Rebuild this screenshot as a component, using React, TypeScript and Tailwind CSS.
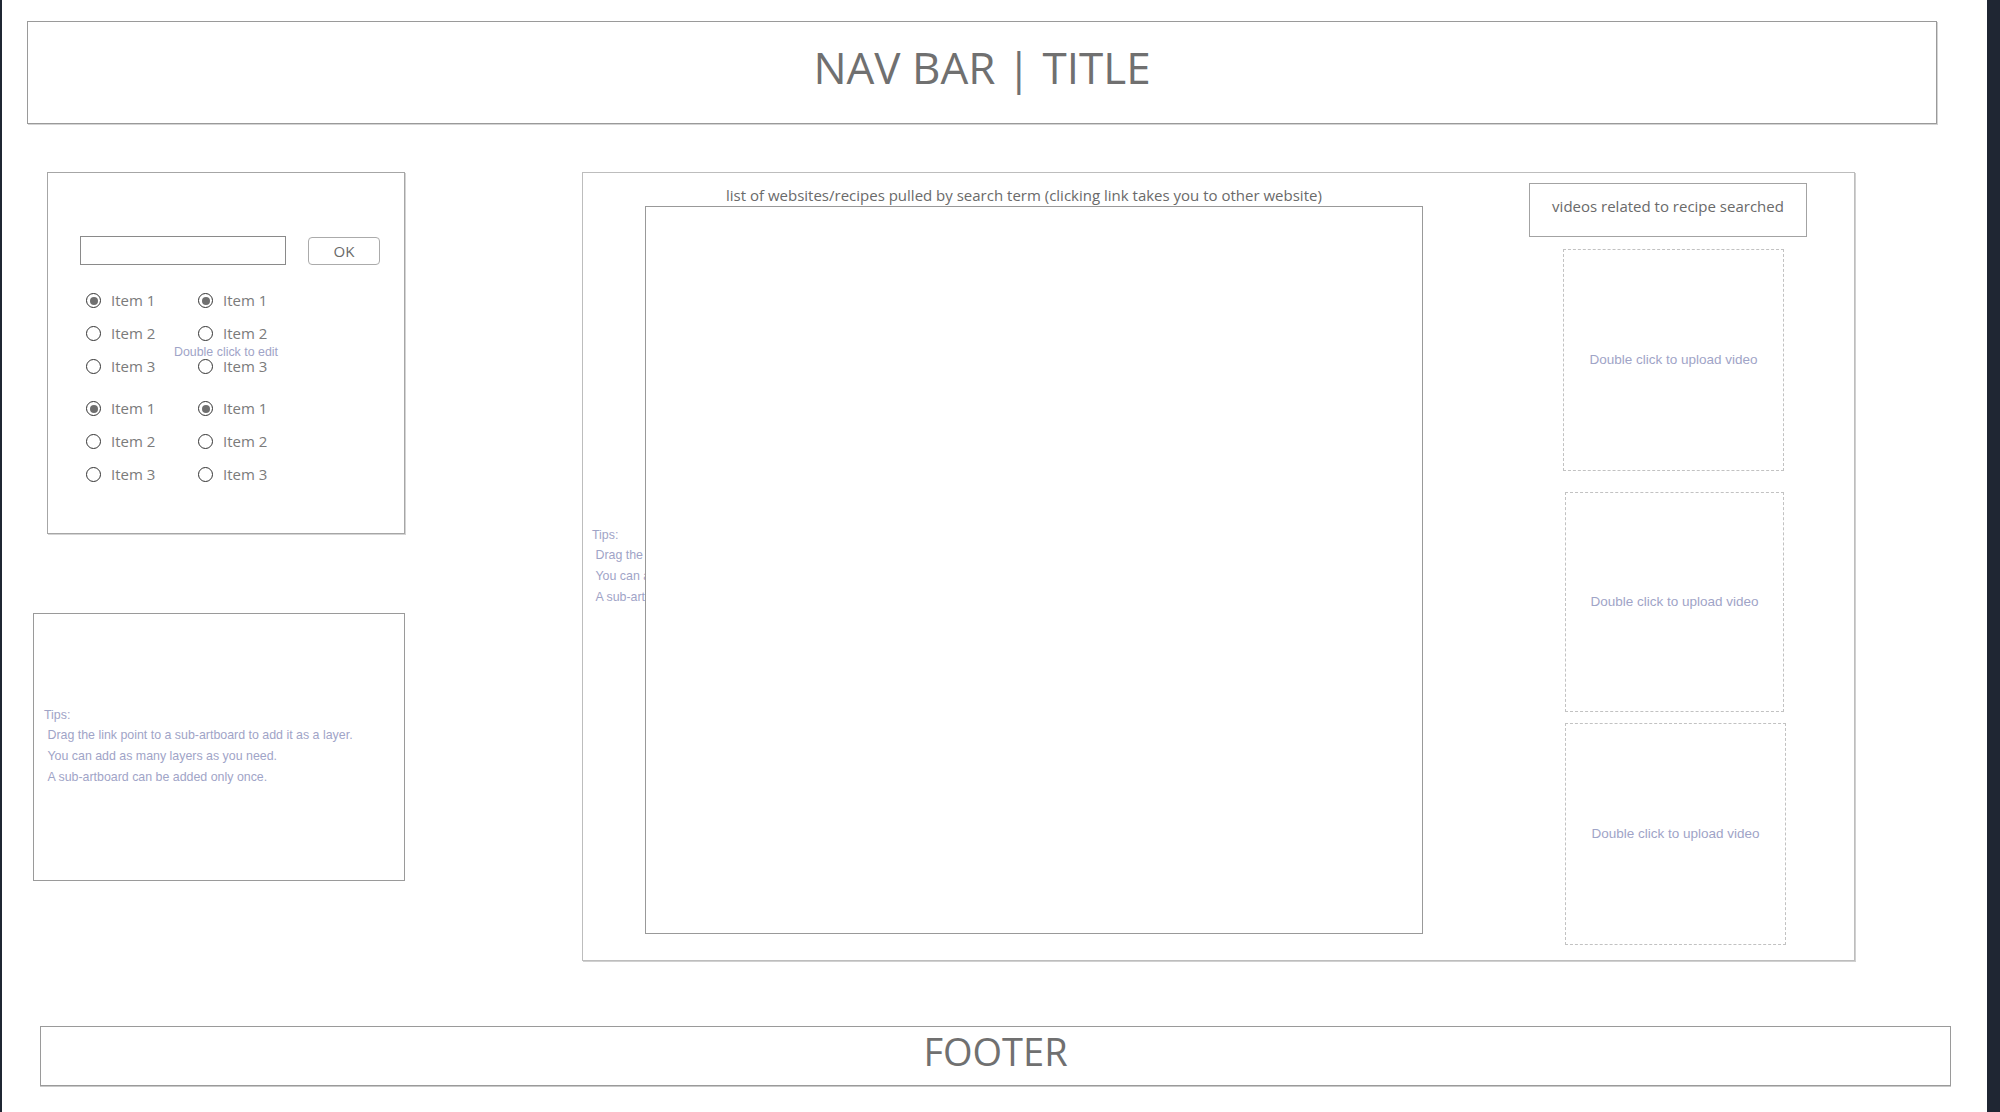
import React from 'react';

const tipLines = [
  'Drag the link point to a sub-artboard to add it as a layer.',
  'You can add as many layers as you need.',
  'A sub-artboard can be added only once.',
];

function Tips() {
  return (
    <div className="text-[12.4px] leading-[21px] text-[#9fa4c7] whitespace-nowrap font-['Liberation_Sans',Arial,sans-serif]">
      <div className="leading-[19px]">Tips:</div>
      {tipLines.map((t) => (
        <div key={t}>{'\u00a0' + t}</div>
      ))}
    </div>
  );
}

function Radio({ checked, label }: { checked: boolean; label: string }) {
  return (
    <div className="w-[112px] h-[33px] flex items-center">
      <span className="w-[15px] h-[15px] rounded-full border-[1.5px] border-[#333] flex items-center justify-center shrink-0">
        {checked && <span className="w-[8px] h-[8px] rounded-full bg-[#6f6f6f]" />}
      </span>
      <span className="ml-[10px] text-[15px] text-[#7b7b7b]">{label}</span>
    </div>
  );
}

function RadioGroup() {
  const items = ['Item 1', 'Item 2', 'Item 3'];
  return (
    <div className="flex">
      {[0, 1].map((col) => (
        <div key={col} className="flex flex-col">
          {items.map((it, i) => (
            <Radio key={it} checked={i === 0} label={it} />
          ))}
        </div>
      ))}
    </div>
  );
}

function VideoSlot({ className }: { className: string }) {
  return (
    <div className={`border border-dashed border-[#c2c2c2] flex items-center justify-center ${className}`}>
      <span className="text-[13.5px] text-[#9fa4c7] font-['Liberation_Sans',Arial,sans-serif]">Double click to upload video</span>
    </div>
  );
}

export default function App() {
  return (
    <div className="flex h-[1112px] w-[2000px] bg-white font-['Open_Sans',sans-serif] overflow-hidden">
      <div className="w-[2px] bg-[#1f2633] shrink-0" />

      <div className="w-[1985px] shrink-0 flex flex-col">
        {/* Nav */}
        <div className="mt-[21px] ml-[25px] w-[1910px] h-[103px] border border-[#9a9a9a] shadow-[1px_1px_0_#d4d4d4] flex justify-center items-start pt-[15px]">
          <h1 className="text-[44px] leading-[60px] text-[#707070]">NAV BAR | TITLE</h1>
        </div>

        <div className="flex items-start mt-[48px] ml-[31px]">
          {/* left column */}
          <div className="w-[372px] flex flex-col items-end">
            <div className="relative w-[358px] h-[362px] border border-[#a6a6a6] shadow-[1px_1px_0_#d4d4d4] pt-[63px]">
              <div className="flex items-end pl-[32px]">
                <div className="w-[206px] h-[29px] border border-[#8a8a8a]" />
                <button className="ml-[22px] w-[72px] h-[28px] border border-[#ababab] rounded-[4px] text-[15px] text-[#6a6a6a] flex items-center justify-center">
                  OK
                </button>
              </div>
              <div className="pl-[38px] mt-[19px]">
                <RadioGroup />
                <div className="mt-[9px]">
                  <RadioGroup />
                </div>
              </div>
              <div className="absolute left-[126px] top-[172px] text-[12.4px] leading-[14px] text-[#9fa4c7] font-['Liberation_Sans',Arial,sans-serif]">
                Double click to edit
              </div>
            </div>

            <div className="mt-[79px] w-[372px] h-[268px] border border-[#9a9a9a] flex flex-col justify-center pl-[10px]">
              <Tips />
            </div>
          </div>

          {/* main */}
          <div className="ml-[177px] w-[1273px] h-[789px] border border-[#bdbdbd] shadow-[1px_1px_0_#d0d0d0] flex items-start">
            <div className="self-center w-[62px] pl-[9px] overflow-hidden">
              <Tips />
            </div>

            <div className="flex flex-col pt-[12px]">
              <div className="pl-[81px] text-[15px] leading-[20px] text-[#6a6a6a] whitespace-nowrap">
                list of websites/recipes pulled by search term (clicking link takes you to other website)
              </div>
              <div className="mt-[1px] w-[778px] h-[728px] border border-[#999] bg-white" />
            </div>

            <div className="ml-[106px] pt-[10px] flex flex-col">
              <div className="w-[278px] h-[54px] border border-[#a3a3a3] flex items-center justify-center pb-[7px] text-[15px] text-[#6a6a6a]">
                videos related to recipe searched
              </div>
              <VideoSlot className="ml-[34px] mt-[12px] w-[221px] h-[222px]" />
              <VideoSlot className="ml-[36px] mt-[21px] w-[219px] h-[220px]" />
              <VideoSlot className="ml-[36px] mt-[11px] w-[221px] h-[222px]" />
            </div>
          </div>
        </div>

        {/* Footer */}
        <div className="mt-[65px] ml-[38px] w-[1911px] h-[60px] border border-[#9a9a9a] shadow-[0_1px_0_#c8c8c8] flex justify-center items-start">
          <span className="text-[38px] leading-[48px] text-[#707070]">FOOTER</span>
        </div>
      </div>

      <div className="flex-1 bg-[#1f2633]" />
    </div>
  );
}
